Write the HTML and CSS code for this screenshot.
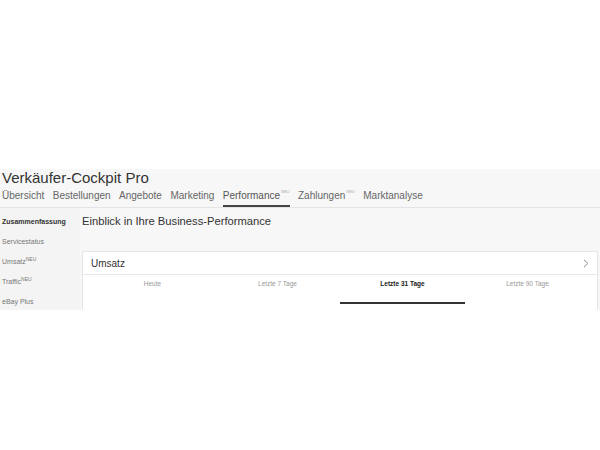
FILE: index.html
```html
<!DOCTYPE html>
<html lang="de">
<head>
<meta charset="utf-8">
<link rel="stylesheet" href="styles.css">
</head>
<body>
<div class="shot">
  <header class="top">
    <h1 class="title">Verkäufer-Cockpit Pro</h1>
    <nav class="nav">
      <a class="nav-item">Übersicht</a>
      <a class="nav-item">Bestellungen</a>
      <a class="nav-item">Angebote</a>
      <a class="nav-item">Marketing</a>
      <a class="nav-item active">Performance<sup class="neu">NEU</sup></a>
      <a class="nav-item">Zahlungen<sup class="neu">NEU</sup></a>
      <a class="nav-item">Marktanalyse</a>
    </nav>
  </header>
  <div class="layout">
    <aside class="side">
      <div class="side-item current">Zusammenfassung</div>
      <div class="side-item">Servicestatus</div>
      <div class="side-item">Umsatz<sup class="sneu">NEU</sup></div>
      <div class="side-item">Traffic<sup class="sneu">NEU</sup></div>
      <div class="side-item">eBay Plus</div>
    </aside>
    <main class="main">
      <h2 class="heading">Einblick in Ihre Business-Performance</h2>
      <section class="card">
        <div class="card-head">
          <span class="card-title">Umsatz</span>
          <svg class="chev" width="6" height="9" viewBox="0 0 6 9"><path d="M1 0.8 L4.8 4.5 L1 8.2" fill="none" stroke="#888" stroke-width="1"/></svg>
        </div>
        <div class="tabs">
          <div class="tab">Heute</div>
          <div class="tab">Letzte 7 Tage</div>
          <div class="tab active">Letzte 31 Tage</div>
          <div class="tab">Letzte 90 Tage</div>
        </div>
        <div class="card-body"></div>
      </section>
    </main>
  </div>
</div>
</body>
</html>
```

FILE: styles.css
```css
html, body {
  margin: 0;
  padding: 0;
  background: #ffffff;
  font-family: "Liberation Sans", Arial, sans-serif;
}
.shot {
  margin-top: 169px;
  height: 141px;
  overflow: hidden;
  background: #f7f7f7;
}
.top {
  border-bottom: 1px solid #e4e4e4;
}
.title {
  margin: 0;
  padding: 0 0 0 2px;
  font-size: 15px;
  line-height: 18px;
  font-weight: normal;
  color: #333;
}
.nav {
  display: flex;
  padding-left: 2px;
  margin-top: 1px;
}
.nav-item {
  font-size: 10px;
  line-height: 16px;
  color: #666;
  padding: 0 0 1px 0;
  margin-right: 8.5px;
  border-bottom: 2px solid transparent;
}
.nav-item.active {
  border-bottom-color: #444;
  color: #555;
}
.neu {
  font-size: 4px;
  color: #aaa;
  vertical-align: top;
  line-height: 8px;
  margin-left: 1px;
}
.layout {
  display: flex;
}
.side {
  width: 80px;
  flex: none;
  padding-top: 4px;
  background: #f4f4f4;
}
.side-item {
  font-size: 7px;
  line-height: 20px;
  color: #777;
  padding-left: 2px;
}
.side-item.current {
  font-weight: bold;
  color: #333;
}
.sneu {
  font-size: 5px;
  vertical-align: top;
  line-height: 14px;
}
.main {
  flex: 1;
  padding: 0 2px 0 2px;
}
.heading {
  margin: 6px 0 0 0;
  font-size: 11.2px;
  line-height: 14px;
  font-weight: normal;
  color: #333;
}
.card {
  margin-top: 23px;
  background: #fff;
  border: 1px solid #e6e6e6;
}
.card-head {
  display: flex;
  align-items: center;
  justify-content: space-between;
  height: 22px;
  padding: 0 8px;
  border-bottom: 1px solid #e8e8e8;
}
.card-title {
  font-size: 10px;
  color: #333;
}
.tabs {
  display: grid;
  grid-template-columns: repeat(4, 1fr);
  padding: 0 7px;
}
.tab {
  text-align: center;
  font-size: 6.5px;
  color: #999;
  padding: 5px 0 15px;
  border-bottom: 2px solid transparent;
}
.tab.active {
  color: #222;
  font-weight: bold;
  border-bottom-color: #333;
}
.card-body {
  height: 60px;
}
```
